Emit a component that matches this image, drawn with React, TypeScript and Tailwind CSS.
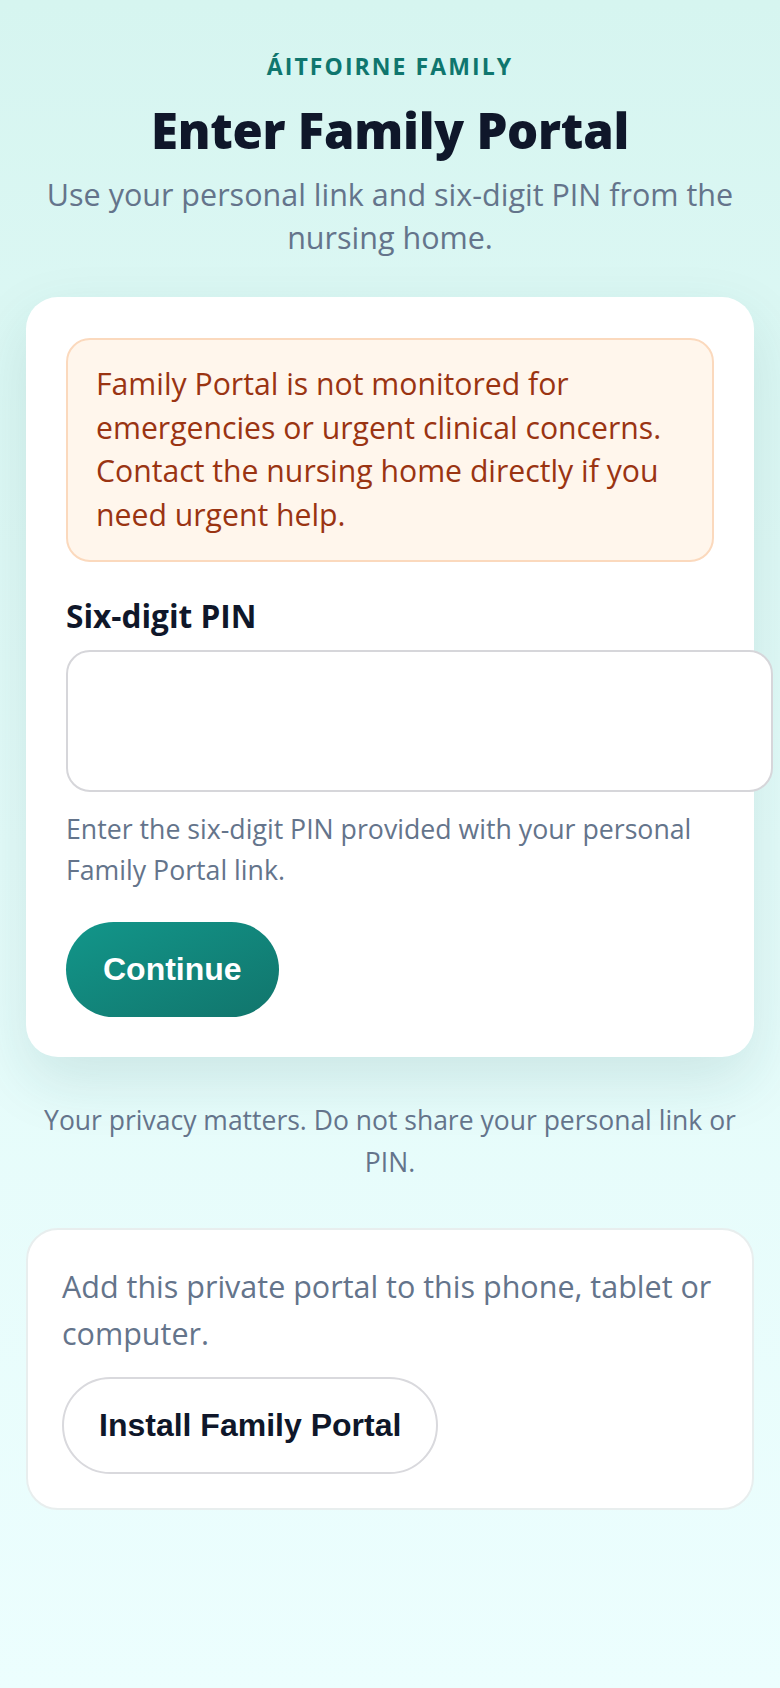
import React from 'react'

export default function App() {
  return (
    <div
      className="min-h-[1688px] w-full bg-gradient-to-b from-[#d6f5f0] via-[#e4fbf9] to-[#ecfefe]"
      style={{ fontFamily: '"Open Sans", "Noto Sans", sans-serif' }}
    >
      <main className="flex flex-col px-[26px] pt-[48px] pb-[60px]">
        {/* header */}
        <div className="flex flex-col items-center text-center">
          <p className="text-[23px] leading-[36px] font-bold tracking-[0.09em] text-[#0f766e]">
            ÁITFOIRNE FAMILY
          </p>
          <h1 className="mt-[17px] text-[49px] leading-[58px] font-extrabold tracking-[-0.005em] text-[#0f172a]">
            Enter Family Portal
          </h1>
          <p className="mt-[14px] text-[30.5px] leading-[43px] text-[#64748b]">
            Use your personal link and six-digit PIN from the nursing home.
          </p>
        </div>

        {/* sign-in card */}
        <section className="mt-[38px] rounded-[32px] bg-white px-[40px] pt-[41px] pb-[40px] shadow-[0_24px_60px_rgba(20,90,90,0.13)]">
          <div className="rounded-[24px] border-2 border-[#fbd9bd] bg-[#fff6ec] px-[28px] pt-[22px] pb-[24px]">
            <p className="text-[30.2px] leading-[43.5px] text-[#9a3412]">
              Family Portal is not monitored for emergencies or urgent clinical concerns. Contact the
              nursing home directly if you need urgent help.
            </p>
          </div>

          <label
            htmlFor="pin"
            className="mt-[30px] block text-[31.6px] leading-[48px] font-bold text-[#0f172a]"
          >
            Six-digit PIN
          </label>
          <input
            id="pin"
            inputMode="numeric"
            className="mt-[10px] block h-[142px] w-[707px] rounded-[24px] border-2 border-[#d6d6da] bg-white px-[28px] text-[32px] outline-none"
          />
          <p className="mt-[16px] text-[26.7px] leading-[41px] text-[#64748b]">
            Enter the six-digit PIN provided with your personal Family Portal link.
          </p>

          <button
            className="mt-[32px] rounded-full bg-gradient-to-br from-[#12968a] to-[#11756c] px-[37px] py-[29px] text-[32px] leading-[37px] font-bold text-white"
            style={{ fontFamily: '"Liberation Sans", Arial, sans-serif' }}
          >
            Continue
          </button>
        </section>

        <p className="mt-[42px] px-[12px] text-center text-[26.5px] leading-[42px] text-[#64748b]">
          Your privacy matters. Do not share your personal link or PIN.
        </p>

        {/* install card */}
        <section className="mt-[45px] rounded-[32px] border-2 border-[#e8eeee] bg-white px-[34px] pt-[33px] pb-[34px]">
          <p className="text-[30.5px] leading-[47px] text-[#64748b]">
            Add this private portal to this phone, tablet or computer.
          </p>
          <button
            className="mt-[20px] rounded-full border-2 border-[#d9d9dd] bg-white px-[35px] py-[28px] text-[32px] leading-[37px] font-bold text-[#0f172a]"
            style={{ fontFamily: '"Liberation Sans", Arial, sans-serif' }}
          >
            Install Family Portal
          </button>
        </section>
      </main>
    </div>
  )
}
